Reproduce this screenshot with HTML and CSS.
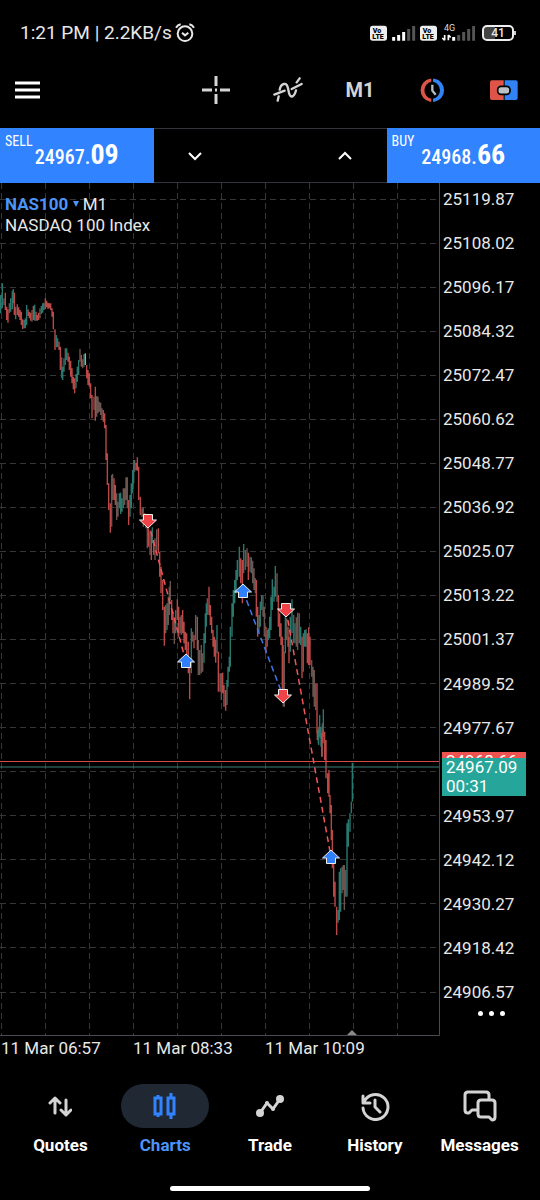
FILE: index.html
```html
<!DOCTYPE html>
<html lang="en">
<head>
  <meta charset="UTF-8">
  <meta name="viewport" content="width=device-width, initial-scale=1">
  <title>NAS100 M1</title>
  <link rel="stylesheet" href="styles.css">
</head>
<body>
  <header class="status">
    <span class="status-text">1:21 PM | 2.2KB/s</span>
    <svg class="alarm" width="20" height="20" viewBox="0 0 60 60">
      <circle cx="30" cy="32" r="22"/>
      <path d="M21 29l9 8 10-8M3 14Q8 6 17 4M57 14Q52 6 43 4"/>
    </svg>
    <div class="status-icons">
      <svg width="105" height="20" viewBox="0 0 315 60">
        <g class="lte">
          <rect x="0" y="8" width="51" height="45" rx="8"/>
          <text x="8" y="29">Vo</text>
          <text x="7" y="48">LTE</text>
          <rect x="150" y="8" width="51" height="45" rx="8"/>
          <text x="158" y="29">Vo</text>
          <text x="157" y="48">LTE</text>
        </g>
        <path class="bars-on" d="M71 53V42M86 53V36M101 53V27M251 53V42"/>
        <path class="bars-off" d="M116 53V18M131 53V9M266 53V36M281 53V27M296 53V18M311 53V9"/>
        <text class="net" x="222" y="25">4G</text>
        <path class="data" d="M224 36v16M217 45l7 7M235 52V36M235 36l7 7"/>
      </svg>
      <div class="battery">41</div>
    </div>
  </header>

  <nav class="toolbar">
    <button class="menu" aria-label="Menu">
      <svg width="26" height="18" viewBox="0 0 26 18"><path d="M0 2H25M0 9H25M0 16H25"/></svg>
    </button>
    <button aria-label="Crosshair">
      <svg width="28" height="28" viewBox="0 0 28 28"><path d="M14 0V10M14 18V28M0 14H10M18 14H28M13 14H15"/></svg>
    </button>
    <button aria-label="Indicators">
      <svg width="30" height="26" viewBox="12 230 90 78"><path class="wave" d="M16 283L47 271M26 301L29 288M32 268C36 248 53 244 57 264L60 278C64 295 76 291 81 270M68 266L98 251M83 246L92 234"/></svg>
    </button>
    <button class="period">M1</button>
    <button aria-label="Trading">
      <svg width="28" height="24" viewBox="445 232 84 72">
        <path class="red" d="M485 234H481A34 35 0 0 0 481 303H485V294A26 26 0 0 1 485 243Z"/>
        <path class="blue" d="M490 234H495A34 35 0 0 1 495 303H490V294A26 26 0 0 0 490 243Z"/>
        <path class="hand" d="M488 252V270L498 282"/>
      </svg>
    </button>
    <button aria-label="One click trading">
      <svg width="28" height="24" viewBox="660 232 84 72">
        <path class="red" d="M666 239H701V298H666Q660 298 660 292V245Q660 239 666 239Z"/>
        <path class="blue" d="M704 239H737Q743 239 743 245V292Q743 298 737 298H704Z"/>
        <rect class="pill" x="683" y="257" width="37" height="24" rx="10"/>
      </svg>
    </button>
  </nav>

  <section class="deal">
    <button class="side">
      <span class="side-name">SELL</span>
      <span class="quote">24967.<b>09</b></span>
    </button>
    <div class="volume">
      <button aria-label="Decrease volume"><svg width="16" height="10" viewBox="0 0 16 10"><path d="M2 2l6 6 6-6"/></svg></button>
      <input type="text" aria-label="Volume">
      <button aria-label="Increase volume"><svg width="16" height="10" viewBox="0 0 16 10"><path d="M2 8l6-6 6 6"/></svg></button>
    </div>
    <button class="side">
      <span class="side-name">BUY</span>
      <span class="quote">24968.<b>66</b></span>
    </button>
  </section>

  <main class="chart">
    <div class="plot">
      <svg class="candles" viewBox="0 183 440 853">
        <path id="grid" class="grid"/>
        <path id="bars-n" class="bar mixed"/>
        <path id="bars-g" class="bar up"/>
        <path id="bars-r" class="bar down"/>
        <path id="bars-w" class="bar light"/>
        <path class="ask" d="M0 761.5H440"/>
        <path class="bid" d="M0 767H440"/>
        <path class="deal-line loss" d="M148 521L186 662M286 610L331 857"/>
        <path class="deal-line win" d="M243 591L283 696"/>
        <g id="marks"></g>
        <path class="now" d="M346 1036L352 1030L358 1036Z"/>
        <path class="frame" d="M439.5 183V1035.5H0"/>
      </svg>
      <div class="legend">
        <a href="#" class="symbol">NAS100 <svg width="6" height="6" viewBox="0 0 6 6"><path d="M0 0H6L3 6Z"/></svg></a> M1<br>
        NASDAQ 100 Index
      </div>
    </div>
    <div class="prices">
      <span>25119.87</span>
      <span>25108.02</span>
      <span>25096.17</span>
      <span>25084.32</span>
      <span>25072.47</span>
      <span>25060.62</span>
      <span>25048.77</span>
      <span>25036.92</span>
      <span>25025.07</span>
      <span>25013.22</span>
      <span>25001.37</span>
      <span>24989.52</span>
      <span>24977.67</span>
      <span class="gap"></span>
      <span>24953.97</span>
      <span>24942.12</span>
      <span>24930.27</span>
      <span>24918.42</span>
      <span>24906.57</span>
      <div class="tag tag-ask">24968.66</div>
      <div class="tag tag-bid">24967.09<br>00:31</div>
      <button class="more" aria-label="More"><i></i><i></i><i></i></button>
    </div>
  </main>
  <div class="times">
    <span>11 Mar 06:57</span>
    <span>11 Mar 08:33</span>
    <span>11 Mar 10:09</span>
  </div>

  <nav class="tabs">
    <a href="#">
      <span class="tab-icon"><svg width="24" height="22" viewBox="0 0 24 22"><path d="M7 18V3M2 8l5-5 5 5M18 5v15M13 15l5 5 5-5"/></svg></span>
      Quotes
    </a>
    <a href="#" class="active">
      <span class="tab-icon"><svg width="24" height="28" viewBox="0 0 24 28"><path d="M2 6h6v16H2zM5 3v3M5 22v3M15 6h6v16h-6zM18 1v5M18 22v5"/></svg></span>
      Charts
    </a>
    <a href="#">
      <span class="tab-icon"><svg width="28" height="24" viewBox="0 0 28 24"><path d="M4 19L11 9L17 15L24 5"/><g class="dots"><circle cx="4" cy="19" r="4"/><circle cx="11" cy="9" r="2"/><circle cx="17" cy="15" r="2"/><circle cx="24" cy="5" r="4"/></g></svg></span>
      Trade
    </a>
    <a href="#">
      <span class="tab-icon"><svg width="30" height="30" viewBox="0 0 30 30"><path d="M4 11A12.5 12.5 0 1 1 3 17M3 5v7h7M15 9v7l5 5"/></svg></span>
      History
    </a>
    <a href="#">
      <span class="tab-icon"><svg width="34" height="32" viewBox="0 0 34 32"><path d="M14 20H9L6 23H5Q2 23 2 20V5Q2 2 5 2H23Q26 2 26 5V9M18 10H29Q32 10 32 13V27Q32 30 29 30L26 27H18Q15 27 15 24V13Q15 10 18 10Z"/></svg></span>
      Messages
    </a>
  </nav>
  <div class="home"></div>

  <script src="chart.js"></script>
</body>
</html>
```
FILE: styles.css
```css
* {
  box-sizing: border-box;
}
body {
  margin: 0;
  background: #000;
  color: #e8e8e8;
  font-family: Roboto, "Liberation Sans", sans-serif;
  font-size: 17px;
}
button {
  padding: 0;
  border: none;
  background: none;
  color: inherit;
  font-family: inherit;
  cursor: pointer;
}
a {
  color: inherit;
  text-decoration: none;
}
svg {
  display: block;
  fill: none;
}

/* Status bar */
.status {
  display: flex;
  align-items: center;
  height: 51px;
  padding: 14px 26px 0 20px;
}
.status-text {
  font-size: 19px;
}
.alarm {
  margin-left: 3px;
  stroke: #e8e8e8;
  stroke-width: 6;
}
.status-icons {
  display: flex;
  align-items: center;
  gap: 7px;
  margin-left: auto;
}
.lte rect {
  fill: #eee;
}
.lte text {
  fill: #000;
  font-size: 21px;
  font-weight: 900;
}
.bars-on {
  stroke: #fff;
  stroke-width: 9;
}
.bars-off {
  stroke: #555;
  stroke-width: 9;
}
.net {
  fill: #ddd;
  font-size: 27px;
}
.data {
  stroke: #fff;
  stroke-width: 5;
}
.battery {
  position: relative;
  width: 32px;
  height: 16px;
  border: 2px solid #eee;
  border-radius: 5px;
  background: linear-gradient(90deg, #444 41%, #000 41%);
  font-size: 12px;
  font-weight: 500;
  line-height: 12px;
  text-align: center;
}
.battery::after {
  content: "";
  position: absolute;
  top: 4px;
  right: -4px;
  width: 2px;
  height: 4px;
  background: #ccc;
}

/* Toolbar */
.toolbar {
  display: flex;
  height: 77px;
}
.toolbar button {
  display: flex;
  align-items: center;
  justify-content: center;
  width: 72px;
  color: #d4d4d4;
}
.toolbar svg {
  stroke: #d4d4d4;
  stroke-width: 3;
}
.toolbar .menu {
  justify-content: flex-start;
  margin-right: auto;
  padding-left: 15px;
}
.toolbar .menu svg {
  stroke: #fff;
}
.toolbar .period {
  font-size: 20px;
  font-weight: 700;
}
.toolbar .wave {
  stroke-width: 7;
  stroke-linecap: round;
}
.toolbar .red {
  fill: #df5449;
  stroke: none;
}
.toolbar .blue {
  fill: #3183f5;
  stroke: none;
}
.toolbar .hand {
  stroke: #b4bcc2;
  stroke-width: 7;
}
.toolbar .pill {
  fill: #b9c0c6;
  stroke: #000;
  stroke-width: 5;
}

/* Sell / buy panel */
.deal {
  display: grid;
  grid-template-columns: 1fr 233px 1fr;
  height: 55px;
}
.side {
  position: relative;
  background: #3183ff;
  color: #fff;
  font-family: "Roboto Condensed", "Liberation Sans Narrow", Roboto, sans-serif;
}
.side-name {
  position: absolute;
  top: 5px;
  left: 5px;
  font-size: 14px;
  line-height: 16px;
}
.quote {
  font-size: 20px;
  font-weight: 500;
  line-height: 32px;
}
.quote b {
  font-size: 28px;
}
.volume {
  display: flex;
  border: 1px solid #33333a;
  border-width: 1px 0;
}
.volume button {
  display: grid;
  place-items: center;
  flex: 0 0 83px;
}
.volume svg {
  stroke: #fff;
  stroke-width: 2;
}
.volume input {
  flex: 1;
  min-width: 0;
  border: none;
  background: none;
  color: #fff;
  text-align: center;
}

/* Chart */
.chart {
  display: flex;
}
.plot {
  position: relative;
  flex: 1;
}
.candles {
  width: 100%;
}
.grid {
  stroke: #363636;
  stroke-dasharray: 6 4;
}
.bar {
  stroke-width: 1.4;
}
.mixed {
  stroke: #69544f;
}
.up {
  stroke: #2a776d;
}
.down {
  stroke: #b94846;
}
.light {
  stroke: #7cb8ab;
}
.ask {
  stroke: #d64a4a;
}
.bid {
  stroke: #3c7f79;
}
.deal-line {
  stroke-width: 1.5;
  stroke-dasharray: 6 4;
}
.loss {
  stroke: #f0555a;
}
.win {
  stroke: #3f78e8;
}
.mark-buy,
.mark-sell {
  fill: #2f80fa;
  stroke: #eee;
}
.mark-sell {
  fill: #f04348;
}
.now {
  fill: #8a8a8a;
}
.frame {
  stroke: #4a4a52;
}
.legend {
  position: absolute;
  top: 11px;
  left: 5px;
  line-height: 21px;
}
.symbol {
  color: #4c94f8;
  font-weight: 700;
}
.symbol svg {
  display: inline-block;
  vertical-align: 3px;
  fill: #4c94f8;
}
.prices {
  position: relative;
  display: flex;
  flex-direction: column;
  justify-content: space-between;
  width: 100px;
  padding: 4px 0 32px 3px;
  line-height: 24px;
}
.gap {
  height: 24px;
}
.tag {
  position: absolute;
  left: 2px;
  width: 84px;
  padding-left: 4px;
  color: #fff;
  line-height: 19px;
}
.tag-ask {
  top: 569px;
  background: #ef5350;
}
.tag-bid {
  top: 575px;
  background: #26a69a;
}
.more {
  position: absolute;
  right: 35px;
  bottom: 20px;
  display: flex;
  gap: 6px;
}
.more i {
  width: 5px;
  height: 5px;
  border-radius: 50%;
  background: #fff;
}
.times {
  display: flex;
  height: 24px;
  padding-left: 1px;
  line-height: 24px;
}
.times span {
  width: 132px;
}

/* Bottom tabs */
.tabs {
  display: flex;
  padding: 24px 8px 0;
}
.tabs a {
  flex: 1;
  display: flex;
  flex-direction: column;
  align-items: center;
  gap: 6px;
  color: #fff;
  font-weight: 700;
  line-height: 22px;
}
.tab-icon {
  display: grid;
  place-items: center;
  width: 88px;
  height: 44px;
  border-radius: 22px;
}
.tab-icon svg {
  stroke: #d4d4d4;
  stroke-width: 3;
  stroke-linecap: round;
  stroke-linejoin: round;
}
.tab-icon .dots {
  fill: #d4d4d4;
  stroke: none;
}
.tabs .active {
  color: #4c94f8;
}
.active .tab-icon {
  background: #202833;
}
.active svg {
  stroke: #3183ff;
  stroke-linecap: butt;
  stroke-linejoin: miter;
}
.home {
  width: 37%;
  height: 5px;
  margin: 30px auto 9px;
  border-radius: 3px;
  background: #fff;
}
```
FILE: chart.js
```js
// Each run: origin of the block, then bars as "x high low type" in thirds of a unit
// g = up, r = down, n = mixed, w = light
const runs = [
  { x: 0, y: 270, bars: `
    2 75 130 g,7 40 115 g,12 85 105 n,16 68 120 r,20 110 150 r,24 118 158 r,28 100 130 n,32 85 125 g,
    37 62 118 g,40 57 100 n,43 68 135 r,47 110 148 g,52 103 135 r,56 112 140 r,60 120 150 r,64 125 165 r,
    68 148 177 r,72 150 175 g,76 145 175 g,80 105 165 g,84 118 138 r,88 125 145 r,92 128 152 r,96 120 155 n,
    100 108 150 r,104 104 152 g,108 125 152 r,112 135 152 r,116 128 150 r,120 115 145 n,124 108 132 g,
    128 100 128 g,132 98 120 g,136 85 118 r,140 92 112 r,144 98 116 r,148 100 115 r,152 100 120 r,
    156 115 140 r,160 125 178 r,165 178 240 r,169 195 232 g,173 205 232 g,177 215 240 r,181 230 300 r,
    185 262 325 n,188 290 330 g,192 265 305 g,196 235 285 n,200 235 270 g,204 248 275 r,208 260 300 r,
    212 272 320 r,216 295 340 r,220 320 358 r,224 325 370 r,228 312 355 g,232 290 335 g,236 270 315 g,
    240 237 275 n,244 255 290 r,248 268 295 n,252 252 290 g,256 250 285 w,260 285 325 r,264 300 345 r,
    268 310 350 r,272 340 385 r,276 375 445 r,282 380 420 n,286 350 452 r,290 378 440 n,294 380 430 n,
    298 395 425 n,302 398 435 n,306 415 450 n,310 420 455 r,314 430 475 r,318 465 570 r,322 550 645 r,
    326 640 720 r,331 700 788 r,335 615 770 n,338 612 690 n,342 625 690 r,346 645 705 r,350 670 750 n,
    354 695 740 n,358 670 715 g,362 668 732 g,366 685 725 g,370 655 715 n,374 655 705 n,378 622 690 n,
    382 622 715 n,386 690 765 r,390 675 740 g,394 640 715 g,398 600 670 g,401 570 640 g,404 570 605 n,
    408 578 600 r,412 562 602 r,416 590 690 r,421 680 735 r,426 715 740 n,430 712 770 n` },
  { x: 100, y: 500, bars: `
    134 40 75 r,138 50 85 n,142 80 145 n,146 85 140 r,150 95 165 n,154 100 180 r,157 82 130 g,161 120 165 r,
    165 115 180 n,170 88 150 n,175 85 160 r,179 155 230 r,183 200 280 r,188 240 330 r,193 320 437 r,
    197 315 400 g,201 310 390 n,205 290 375 n,208 260 345 n,211 243 300 n,215 300 360 r,219 335 400 r,
    223 360 432 n,227 330 400 g,232 298 360 r,236 320 410 r,240 350 400 n,244 345 405 n,248 330 400 r,
    252 365 430 r,256 395 450 r,260 400 490 r,265 425 520 r,269 490 598 r,274 385 520 g,278 395 425 n,
    282 405 445 r,287 345 420 g,292 350 450 r,295 420 525 n,299 450 525 n,304 435 520 n,308 460 515 n,
    312 400 488 g,316 340 430 g,319 310 380 g,322 295 345 n,327 260 345 r,331 315 375 r,335 350 400 r,
    339 390 440 r,343 410 470 r,347 420 488 r,351 375 460 g,355 455 575 r,360 520 575 n,364 520 600 n,
    368 518 580 r,372 555 620 r,377 570 632 r,381 540 615 g,384 500 560 g,388 470 515 g,391 380 500 g,
    396 310 410 g,400 270 350 g,404 240 310 g,408 210 280 g,412 180 240 g` },
  { x: 220, y: 530, bars: `
    58 50 140 g,62 85 160 r,67 90 220 r,71 42 130 g,76 60 120 n,81 55 110 n,85 68 150 r,90 80 125 n,
    94 82 130 g,98 92 160 n,102 115 180 n,106 145 190 n,109 150 260 r,113 230 320 r,117 255 305 g,
    121 215 290 g,125 195 240 g,129 198 260 n,133 230 320 n,138 290 370 r,142 300 350 g,145 295 330 g,
    149 260 325 g,153 200 300 g,157 148 240 g,162 170 215 g,166 108 200 g,171 130 215 n,175 195 290 r,
    179 250 320 r,183 280 345 r,187 320 480 r,190 345 530 n,193 365 530 n,196 260 370 g,200 265 330 n,
    204 290 350 r,207 320 400 r,211 260 365 g,216 208 310 g,221 255 340 n,225 280 340 g,229 262 350 n,
    233 248 360 n,238 250 340 n,242 290 345 g,246 320 445 r,250 310 425 g,254 300 350 g,258 298 350 g,
    262 310 400 r,266 292 405 r,270 320 405 r,275 390 440 n,279 410 500 n,283 420 530 n,287 460 540 n,
    291 460 610 r,295 590 640 n,299 555 620 g,303 590 650 g,307 580 680 n,310 538 620 g,314 605 690 r` },
  { x: 290, y: 730, bars: `
    104 5 60 r,108 30 145 r,113 130 190 r,117 120 200 r,120 195 250 r,124 225 330 r,127 300 415 r,
    131 400 500 r,135 455 530 r,140 530 615 r,144 540 578 g,148 425 570 g,152 415 545 g,156 410 490 n,
    160 405 480 n,163 405 540 n,167 420 500 n,171 280 500 g,175 268 350 g,180 250 305 g,184 215 250 g,
    187 98 215 g,82 0 30 r,86 0 45 g,91 0 25 g,95 10 80 r,99 0 40 r` }
];

const paths = { g: '', r: '', n: '', w: '' };
runs.forEach(run => {
  run.bars.trim().split(',').forEach(bar => {
    const [x, high, low, type] = bar.trim().split(' ');
    paths[type] += `M${run.x + x / 3} ${run.y + high / 3}V${run.y + low / 3}`;
  });
});
Object.keys(paths).forEach(type => {
  document.getElementById('bars-' + type).setAttribute('d', paths[type]);
});

// Grid
let grid = '';
for (let x = 1; x < 440; x += 44) {
  grid += `M${x + 0.5} 183V1036`;
}
for (let i = 0; i < 19; i++) {
  grid += `M0 ${Math.round(198.6 + i * 44.05) + 0.5}H440`;
}
document.getElementById('grid').setAttribute('d', grid);

// Deal markers
const arrow = 'M0 -7L8.5 1H4.5V6.5H-4.5V1H-8.5Z';
const marks = [
  ['sell', 148, 521],
  ['buy', 186, 661],
  ['buy', 243, 591],
  ['sell', 283, 696],
  ['sell', 286, 610],
  ['buy', 331, 857]
];
document.getElementById('marks').innerHTML = marks.map(([side, x, y]) =>
  `<path class="mark-${side}" d="${arrow}" transform="translate(${x} ${y})${side === 'sell' ? ' rotate(180)' : ''}"/>`
).join('');
```
